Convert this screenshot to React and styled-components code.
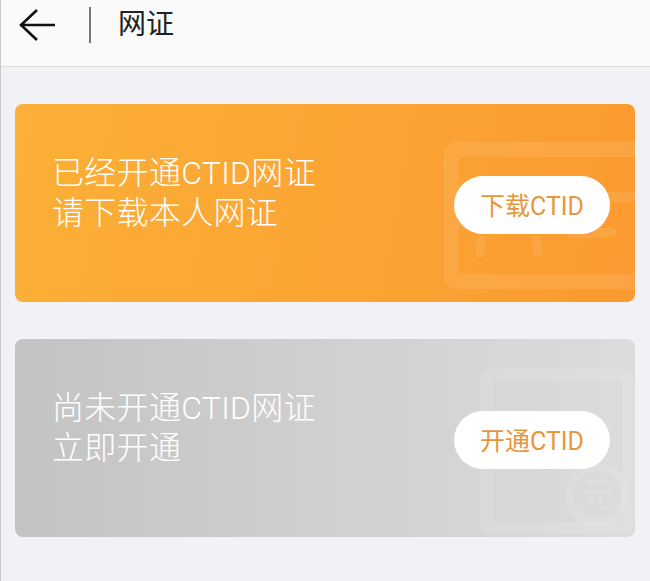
import React from "react";
import styled, { createGlobalStyle } from "styled-components";

const GlobalStyle = createGlobalStyle`
  html, body {
    margin: 0;
    padding: 0;
    background: #f2f1f6;
  }
  body {
    font-family: "Roboto", "Noto Sans CJK SC", sans-serif;
  }
`;

const Page = styled.div`
  width: 650px;
  height: 581px;
  overflow: hidden;
  box-sizing: border-box;
  border-left: 1px solid #c9c9c9;
  background: #f2f1f6;
`;

const Header = styled.header`
  height: 67px;
  box-sizing: border-box;
  display: flex;
  align-items: center;
  padding: 0 0 17px 18px;
  background: #fafafa;
  border-bottom: 1px solid #dddddd;
`;

const BackIcon = styled.svg`
  width: 37px;
  height: 34px;
  flex: none;
`;

const Divider = styled.div`
  width: 2px;
  height: 36px;
  margin-left: 33px;
  background: #777777;
`;

const HeaderTitle = styled.h1`
  margin: 0 0 0 27px;
  font-size: 28px;
  font-weight: 400;
  line-height: 36px;
  color: #222222;
`;

const Cards = styled.main`
  display: flex;
  flex-direction: column;
  gap: 37px;
  padding: 37px 15px 0 14px;
`;

const Card = styled.section`
  position: relative;
  height: 198px;
  box-sizing: border-box;
  display: flex;
  align-items: center;
  justify-content: space-between;
  padding: 0 25px 0 37px;
  border-radius: 8px;
  overflow: hidden;
  background: ${(p) =>
    p.$tone === "orange"
      ? "linear-gradient(100deg, #fbb037 0%, #fb9a30 100%)"
      : "linear-gradient(90deg, #c3c3c3 0%, #dcdcdc 100%)"};
`;

const Message = styled.p`
  position: relative;
  margin: 0 0 20px;
  font-size: 32px;
  font-weight: 300;
  line-height: 40px;
  letter-spacing: 0.3px;
  color: #ffffff;
`;

const ActionButton = styled.button`
  position: relative;
  width: 156px;
  height: 58px;
  margin-top: 4px;
  padding: 0 0 3px;
  border: 0;
  border-radius: 29px;
  background: #ffffff;
  color: #e8963c;
  font-family: inherit;
  font-size: 25px;
  white-space: nowrap;
`;

const Watermark = styled.svg`
  position: absolute;
  top: 0;
  right: 0;
  width: 200px;
  height: 198px;
`;

const MarkText = styled.text`
  font-size: 34px;
  fill: #ffffff;
  fill-opacity: 0.14;
  stroke: none;
`;

function CertMark() {
  return (
    <Watermark viewBox="0 0 200 198" fill="none" stroke="#fff" strokeOpacity="0.09">
      <rect x="16" y="45.5" width="210" height="132" rx="6" strokeWidth="15" />
      <path d="M46 136 L45 149 M101 136 L103 149" strokeWidth="9" strokeLinecap="round" />
      <path d="M172 93 H200 M137 129 H176" strokeWidth="10" strokeLinecap="round" />
    </Watermark>
  );
}

function UnopenedMark() {
  return (
    <Watermark viewBox="0 0 200 198" fill="none" stroke="#fff" strokeOpacity="0.11">
      <rect x="51.5" y="36" width="142" height="153" rx="6" strokeWidth="13" />
      <circle cx="162" cy="156" r="28" strokeWidth="8" />
      <MarkText x="145" y="168">元</MarkText>
    </Watermark>
  );
}

export default function App() {
  return (
    <Page>
      <GlobalStyle />
      <Header>
        <BackIcon viewBox="0 0 37 34" fill="none" stroke="#111" strokeWidth="2.6">
          <path d="M18 2 L2 17 L18 32 M2 17 H36" />
        </BackIcon>
        <Divider />
        <HeaderTitle>网证</HeaderTitle>
      </Header>
      <Cards>
        <Card $tone="orange">
          <CertMark />
          <Message>
            已经开通CTID网证
            <br />
            请下载本人网证
          </Message>
          <ActionButton>下载CTID</ActionButton>
        </Card>
        <Card $tone="gray">
          <UnopenedMark />
          <Message>
            尚未开通CTID网证
            <br />
            立即开通
          </Message>
          <ActionButton>开通CTID</ActionButton>
        </Card>
      </Cards>
    </Page>
  );
}
